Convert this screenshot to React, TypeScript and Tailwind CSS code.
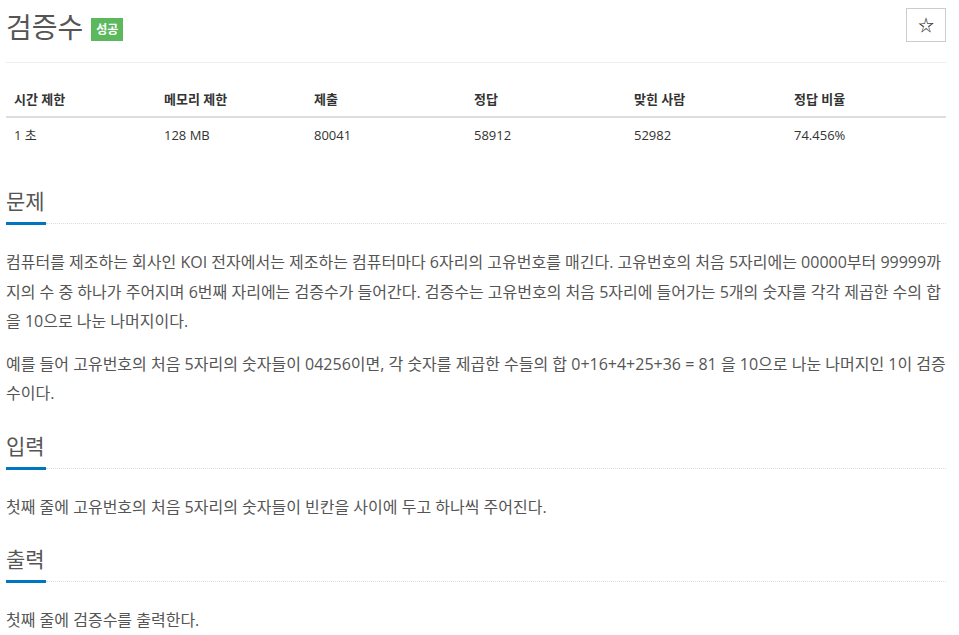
import React from "react";

const font = { fontFamily: '"Open Sans", "Noto Sans CJK KR", sans-serif' };

function Section({ title, children, first }: { title: string; children: React.ReactNode; first?: boolean }) {
  return (
    <section className={first ? "mt-[33px]" : "mt-[22px]"}>
      <div className="flex items-end">
        <h2 className="text-[21px] leading-[30px] text-[#555] border-b-[3px] border-[#0076c0] pb-[6px] w-[40px] whitespace-nowrap">
          {title}
        </h2>
        <div className="flex-1 border-b border-dotted border-[#ddd] mb-[1px]" />
      </div>
      <div className="mt-[23px] text-[16px] leading-[29.5px] text-[#555]">{children}</div>
    </section>
  );
}

export default function App() {
  const heads = ["시간 제한", "메모리 제한", "제출", "정답", "맞힌 사람", "정답 비율"];
  const vals = ["1 초", "128 MB", "80041", "58912", "52982", "74.456%"];
  const widths = ["w-[150px]", "w-[150px]", "w-[160px]", "w-[160px]", "w-[160px]", "w-[160px]"];
  return (
    <div className="bg-white min-h-[635px] px-[6px] pr-[13px]" style={font}>
      <div className="flex items-start justify-between pt-[8px] pb-[18px] border-b border-[#eee]">
        <div className="flex items-center pt-[2px]">
          <h1 className="text-[28px] leading-[34px] text-[#555]">검증수</h1>
          <span className="ml-[8px] mt-[4px] bg-[#5cb85c] text-white text-[12px] font-bold px-[5px] leading-[23px] h-[23px]">
            성공
          </span>
        </div>
        <button className="w-[40px] h-[34px] border border-[#ccc] bg-white flex items-center justify-center text-[16px] text-[#222]">
          ☆
        </button>
      </div>

      <table className="mt-[21px] w-[940px] text-[13px] text-[#333] border-collapse">
        <thead>
          <tr className="border-b-2 border-[#ddd]">
            {heads.map((h, i) => (
              <th key={h} className={`${widths[i]} text-left font-bold px-[8px] h-[33px]`}>
                {h}
              </th>
            ))}
          </tr>
        </thead>
        <tbody>
          <tr>
            {vals.map((v) => (
              <td key={v} className="px-[8px] h-[36px]">
                {v}
              </td>
            ))}
          </tr>
        </tbody>
      </table>

      <Section title="문제" first>
        <p>
          컴퓨터를 제조하는 회사인 KOI 전자에서는 제조하는 컴퓨터마다 6자리의 고유번호를 매긴다. 고유번호의 처음 5자리에는 00000부터 99999까지의 수 중 하나가 주어지며 6번째 자리에는 검증수가 들어간다. 검증수는 고유번호의 처음 5자리에 들어가는 5개의 숫자를 각각 제곱한 수의 합을 10으로 나눈 나머지이다.
        </p>
        <p className="mt-[13px]">
          예를 들어 고유번호의 처음 5자리의 숫자들이 04256이면, 각 숫자를 제곱한 수들의 합 0+16+4+25+36 = 81 을 10으로 나눈 나머지인 1이 검증수이다.
        </p>
      </Section>

      <Section title="입력">
        <p>첫째 줄에 고유번호의 처음 5자리의 숫자들이 빈칸을 사이에 두고 하나씩 주어진다.</p>
      </Section>

      <Section title="출력">
        <p>첫째 줄에 검증수를 출력한다.</p>
      </Section>
    </div>
  );
}
